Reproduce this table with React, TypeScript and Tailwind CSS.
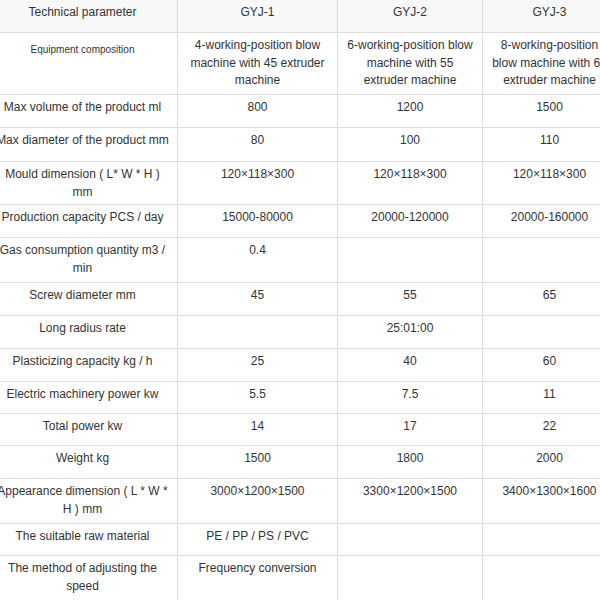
import React from 'react';

type Row = {
  label: string;
  cells: string[];
  h: number;
  small?: boolean;
};

const ROWS: Row[] = [
  {
    label: 'Equipment composition',
    small: true,
    h: 62,
    cells: [
      '4-working-position blow machine with 45 extruder machine',
      '6-working-position blow machine with 55 extruder machine',
      '8-working-position blow machine with 65 extruder machine',
    ],
  },
  { label: 'Max volume of the product ml', h: 33, cells: ['800', '1200', '1500'] },
  { label: 'Max diameter of the product mm', h: 34, cells: ['80', '100', '110'] },
  { label: 'Mould dimension ( L* W * H ) mm', h: 43, cells: ['120×118×300', '120×118×300', '120×118×300'] },
  { label: 'Production capacity PCS / day', h: 33, cells: ['15000-80000', '20000-120000', '20000-160000'] },
  { label: 'Gas consumption quantity m3 / min', h: 45, cells: ['0.4', '', ''] },
  { label: 'Screw diameter mm', h: 33, cells: ['45', '55', '65'] },
  { label: 'Long radius rate', h: 33, cells: ['', '25:01:00', ''] },
  { label: 'Plasticizing capacity kg / h', h: 33, cells: ['25', '40', '60'] },
  { label: 'Electric machinery power kw', h: 32, cells: ['5.5', '7.5', '11'] },
  { label: 'Total power kw', h: 32, cells: ['14', '17', '22'] },
  { label: 'Weight kg', h: 33, cells: ['1500', '1800', '2000'] },
  { label: 'Appearance dimension ( L * W * H ) mm', h: 45, cells: ['3000×1200×1500', '3300×1200×1500', '3400×1300×1600'] },
  { label: 'The suitable raw material', h: 32, cells: ['PE / PP / PS / PVC', '', ''] },
  { label: 'The method of adjusting the speed', h: 45, cells: ['Frequency conversion', '', ''] },
];

const td = 'border border-[#dddddd] px-[6px] pt-[4px] pb-0 align-top text-center';

export default function App() {
  return (
    <div className="w-[600px] h-[600px] overflow-hidden bg-white">
      <table
        className="table-fixed border-collapse ml-[-13px] mt-[-1px] text-[12px] leading-[17.5px] text-[#333333]"
        style={{ fontFamily: '"Liberation Sans", Arial, sans-serif', width: 629 }}
      >
        <colgroup>
          <col className="w-[190px]" />
          <col className="w-[160px]" />
          <col className="w-[145px]" />
          <col className="w-[134px]" />
        </colgroup>
        <thead>
          <tr className="bg-[#f8f8f8]">
            <th className={`${td} h-[33px] font-normal`}>Technical parameter</th>
            <th className={`${td} h-[33px] font-normal`}>GYJ-1</th>
            <th className={`${td} h-[33px] font-normal`}>GYJ-2</th>
            <th className={`${td} h-[33px] font-normal`}>GYJ-3</th>
          </tr>
        </thead>
        <tbody>
          {ROWS.map((r) => (
            <tr key={r.label} style={{ height: r.h }}>
              <td className={r.small ? `${td} text-[10px] pt-[8px]` : td}>{r.label}</td>
              {r.cells.map((c, i) => (
                <td key={i} className={td}>
                  {c}
                </td>
              ))}
            </tr>
          ))}
        </tbody>
      </table>
    </div>
  );
}
